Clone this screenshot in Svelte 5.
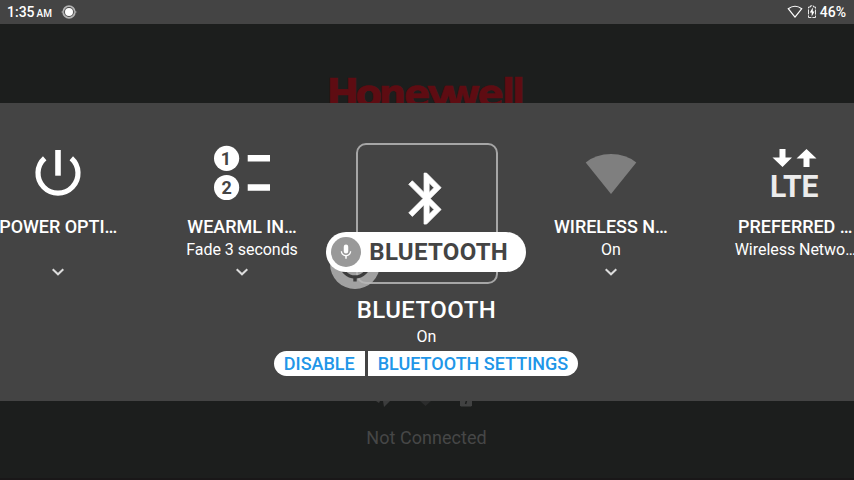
<script>
  const tiles = [
    { id: 'power', title: 'POWER OPTI…', sub: '', more: true },
    { id: 'wearml', title: 'WEARML IN…', sub: 'Fade 3 seconds', more: true },
    { id: 'bluetooth', title: 'BLUETOOTH', sub: 'On', selected: true },
    { id: 'wireless', title: 'WIRELESS N…', sub: 'On', more: true },
    { id: 'network', title: 'PREFERRED …', sub: 'Wireless Netwo…', more: false }
  ];
</script>

<div class="screen">
  <header class="status">
    <span class="time">1:35<small>AM</small></span>
    <svg class="camera" width="16" height="16" viewBox="0 0 16 16">
      <circle cx="8" cy="8" r="5.8" fill="none" stroke="#b4b4b4" stroke-width="1.800" />
      <path d="M.7 8h2M13.300 8h2" stroke="#999" stroke-width="2" />
      <circle cx="8" cy="8" r="4" fill="#fff" />
    </svg>
    <span class="grow"></span>
    <svg class="wifi" width="16" height="14" viewBox="0 0 16 14">
      <path d="M1.200 3.700Q8-1.200 14.800 3.700L8 12.200z" fill="none" stroke="#fff" stroke-width="1.200" stroke-linejoin="round" />
    </svg>
    <svg class="battery" width="8" height="14" viewBox="0 0 8 14">
      <path d="M.5 2h2V.8h3V2h2v10.500h-7z" fill="none" stroke="#e8e8e8" stroke-dasharray="5 1" />
      <path d="M4.800 2.600 1.800 7.400h1.900v4L6.500 6.500H4.800z" fill="#fff" />
    </svg>
    <span class="percent">46%</span>
  </header>

  <div class="backdrop top">
    <svg width="200" height="45" viewBox="0 0 200 45">
      <text y="37" x="-3.600 25.200 48.600 74 97 114.500 147.500 171.700 181.700">Honeywell</text>
    </svg>
  </div>

  <section class="panel">
    <div class="tiles">
      {#each tiles as tile (tile.id)}
        <article class="tile {tile.id}">
          {#if tile.selected}
            <div class="frame">
              <svg width="61.200" height="61.200" viewBox="0 0 24 24">
                <path fill="#fff" stroke="#fff" stroke-width="0.300" d="M17.710 7.710 12 2h-1v7.590L6.410 5 5 6.410 10.590 12 5 17.590 6.410 19 11 14.410V22h1l5.710-5.710L13.410 12l4.300-4.290zM13 5.830l1.880 1.880L13 9.590V5.830zm1.880 10.460L13 18.170v-3.760l1.880 1.880z" />
              </svg>
            </div>
            <div class="ghost">
              <svg width="50" height="50" viewBox="0 0 50 50">
                <path d="M11 24a14 14 0 0 0 28 0M25 38v4.500" fill="none" stroke="#3c3c3c" stroke-width="3.400" />
                <rect x="19.500" y="7" width="11" height="24" rx="5.500" fill="#3c3c3c" />
              </svg>
            </div>
            <div class="bubble">
              <span class="disc">
                <svg width="18" height="18" viewBox="0 0 24 24">
                  <path fill="#fff" d="M12 14a3 3 0 0 0 3-3V5a3 3 0 0 0-6 0v6a3 3 0 0 0 3 3zm5.300-3c0 3-2.540 5.100-5.300 5.100S6.700 14 6.700 11H5c0 3.410 2.720 6.230 6 6.720V21h2v-3.280c3.280-.48 6-3.300 6-6.720z" />
                </svg>
              </span>
              <b>{tile.title}</b>
            </div>
          {:else}
            <svg class="icon" width="60" height="60" viewBox="0 0 60 60">
              {#if tile.id === 'power'}
                <path d="M16.700 15.200a20 20 0 1 0 26.600 0" fill="none" stroke="#fff" stroke-width="5.200" />
                <path d="M30 7v25.700" stroke="#fff" stroke-width="5.600" />
              {:else if tile.id === 'wearml'}
                <circle cx="14.600" cy="15.300" r="12.600" fill="#fff" />
                <circle cx="14.600" cy="44.500" r="12.600" fill="#fff" />
                <text class="num" x="14" y="21.700">1</text>
                <text class="num" x="14.600" y="51">2</text>
                <path d="M35.700 15.300H58M35.700 44.500H58" stroke="#fff" stroke-width="6.400" />
              {:else if tile.id === 'wireless'}
                <path d="M4.700 19.500Q15 11 30 11t25.300 8.500L30 51z" fill="#7f7f7f" />
              {:else}
                <path d="M14.500 6h6v8.500h6.500L17.500 24 7.500 14.500h7zM38.500 24h6v-8.500h7L41.500 6 31.500 15.500h7z" fill="#fff" />
                <text class="lte" x="5" y="53.500" textLength="48.500" lengthAdjust="spacingAndGlyphs">LTE</text>
              {/if}
            </svg>
            <h2>{tile.title}</h2>
            <p>{tile.sub}</p>
            {#if tile.more}
              <svg class="chevron" width="14" height="10" viewBox="0 0 14 10">
                <path d="m1.700 2.200 5.300 5.100L12.300 2.200" fill="none" stroke="#dcdcdc" stroke-width="2" />
              </svg>
            {/if}
          {/if}
        </article>
      {/each}
    </div>
    <h1>BLUETOOTH</h1>
    <p class="state">On</p>
    <div class="actions">
      <button>DISABLE</button>
      <button>BLUETOOTH SETTINGS</button>
    </div>
  </section>

  <div class="backdrop bottom">
    <svg width="110" height="8" viewBox="0 0 110 8">
      <path d="m6 0 3 2 1-2zM13 0h7l-6 6z" fill="#3c3d3d" />
      <path d="M50 0h11l-5.500 5z" fill="#2b2c2c" />
      <path d="M90 0h12v4.500l-1 1H91l-1-1z" fill="#414242" />
      <path d="m96.500 0-1 3" stroke="#1c1e1d" stroke-width="1.500" />
    </svg>
    <span>Not Connected</span>
  </div>
</div>

<style>
  .screen {
    width: 854px;
    height: 480px;
    overflow: hidden;
    display: flex;
    flex-direction: column;
    background: #1c1e1d;
    color: #fff;
    font-family: Roboto, sans-serif;
  }
  .screen svg { display: block; flex: none; }
  .status {
    height: 24px;
    box-sizing: border-box;
    padding: 0 8px 0 7px;
    display: flex;
    align-items: center;
    background: #444;
    font-size: 14px;
    font-weight: 500;
  }
  .time { width: 54px; line-height: 24px; padding-top: 1px; white-space: nowrap; }
  small { font-size: 10px; margin-left: 2px; }
  .grow { flex: 1; }
  .wifi { margin-right: 5px; }
  .battery { margin-right: 4px; }
  .backdrop { background: #1c1e1d; display: flex; flex-direction: column; align-items: center; overflow: hidden; }
  .top { height: 79px; flex: none; }
  .top svg { margin: 46px 0 0 6px; overflow: visible; }
  .top text {
    font-family: "DejaVu Sans", sans-serif;
    font-weight: 700;
    font-size: 39px;
    fill: #5e0c12;
    stroke: #5e0c12;
    stroke-width: 0.600;
  }
  .panel {
    height: 298px;
    flex: none;
    background: #444;
    display: flex;
    flex-direction: column;
    align-items: center;
  }
  .tiles { display: flex; flex: none; width: 922px; height: 191px; }
  .tile {
    width: 184.400px;
    flex: none;
    box-sizing: border-box;
    display: flex;
    flex-direction: column;
    align-items: center;
    position: relative;
  }
  .wearml, .wireless, .network { padding-right: 1px; }
  .icon { margin-top: 40px; }
  h2, h1, p { margin: 0; white-space: nowrap; }
  h2 { margin-top: 13px; font-size: 18px; line-height: 22px; font-weight: 500; letter-spacing: -0.040px; }
  .tile p { height: 24px; font-size: 16px; line-height: 24px; letter-spacing: -0.040px; }
  .chevron { margin-top: 5px; }
  .num { font: 700 18px Roboto, sans-serif; fill: #444; text-anchor: middle; }
  .lte { font: 700 31px Roboto, sans-serif; fill: #ececec; }
  .frame {
    width: 142px;
    height: 141px;
    margin-top: 40px;
    box-sizing: border-box;
    border: 2px solid #a6a6a6;
    border-radius: 10px;
    display: flex;
    justify-content: center;
    padding-top: 23px;
  }
  .ghost {
    position: absolute;
    left: -5px;
    top: 136px;
    width: 50px;
    height: 50px;
    border-radius: 50%;
    background: rgba(185, 185, 185, 0.800);
  }
  .bubble {
    position: absolute;
    left: -9px;
    top: 129px;
    width: 200px;
    height: 40px;
    box-sizing: border-box;
    padding-left: 5px;
    border-radius: 20px;
    background: #fff;
    color: #444;
    display: flex;
    align-items: center;
    gap: 8.500px;
    font-size: 24px;
    letter-spacing: 0.300px;
  }
  .disc {
    width: 30px;
    height: 30px;
    border-radius: 50%;
    background: #999;
    display: flex;
    align-items: center;
    justify-content: center;
  }
  h1 { font-size: 24px; font-weight: 500; line-height: 30px; margin-top: 1px; letter-spacing: 0.450px; padding-right: 1px; }
  .state { font-size: 16px; line-height: 24px; padding-right: 1px; }
  .actions { display: flex; gap: 3px; margin: 2px 0 0 -2px; }
  button {
    height: 25px;
    border: 0;
    padding: 0 10px;
    background: #fff;
    color: #2196e8;
    font: 500 18px Roboto, sans-serif;
    line-height: 25px;
  }
  button:first-child { border-radius: 13px 0 0 13px; }
  button:last-child { border-radius: 0 13px 13px 0; }
  .bottom { height: 79px; border-bottom: 2px solid #191718; box-sizing: border-box; }
  .bottom svg { margin-right: 4px; }
  .bottom span { margin-top: 18px; padding-right: 1px; font-size: 18px; line-height: 22px; letter-spacing: 0.050px; color: #464747; }
</style>
